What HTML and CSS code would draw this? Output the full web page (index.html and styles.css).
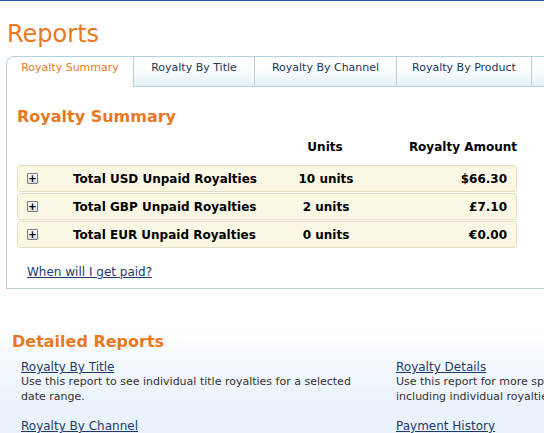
FILE: index.html
```html
<!DOCTYPE html>
<html>
<head>
<meta charset="utf-8">
<link rel="stylesheet" href="styles.css">
</head>
<body>
<div class="topbar"></div>
<h1 class="page-title">Reports</h1>
<div class="tabs">
  <div class="tab active tab-summary">Royalty Summary</div>
  <div class="tab tab-title">Royalty By Title</div>
  <div class="tab tab-channel">Royalty By Channel</div>
  <div class="tab tab-product">Royalty By Product</div>
  <div class="tab tab-details">Royalty Details</div>
</div>
<div class="panel">
  <h2 class="section-title">Royalty Summary</h2>
  <div class="summary">
    <div class="head">
      <span class="c-units">Units</span>
      <span class="c-amount">Royalty Amount</span>
    </div>
    <div class="row">
      <span class="plus">+</span>
      <span class="c-label">Total USD Unpaid Royalties</span>
      <span class="c-units">10 units</span>
      <span class="c-amount">$66.30</span>
    </div>
    <div class="row">
      <span class="plus">+</span>
      <span class="c-label">Total GBP Unpaid Royalties</span>
      <span class="c-units">2 units</span>
      <span class="c-amount">£7.10</span>
    </div>
    <div class="row">
      <span class="plus">+</span>
      <span class="c-label">Total EUR Unpaid Royalties</span>
      <span class="c-units">0 units</span>
      <span class="c-amount">€0.00</span>
    </div>
  </div>
  <a class="paid-link" href="#">When will I get paid?</a>
</div>
<div class="detailed">
  <h2 class="section-title">Detailed Reports</h2>
  <div class="report-grid">
    <div class="report">
      <a href="#">Royalty By Title</a>
      <p>Use this report to see individual title royalties for a selected date range.</p>
    </div>
    <div class="report">
      <a href="#">Royalty Details</a>
      <p>Use this report for more specific royalty information, including individual royalties by title and channel.</p>
    </div>
    <div class="report">
      <a href="#">Royalty By Channel</a>
      <p>Use this report to see royalties for each sales channel.</p>
    </div>
    <div class="report">
      <a href="#">Payment History</a>
      <p>Use this report to see your past payments.</p>
    </div>
  </div>
</div>
</body>
</html>
```
FILE: styles.css
```css
html, body {
  overflow: hidden;
}
body {
  margin: 0;
  width: 760px;
  font-family: "DejaVu Sans", Verdana, sans-serif;
  color: #000;
  background: #fff;
}
.topbar {
  height: 1px;
  background: #1f5c99;
}
.page-title {
  margin: 0;
  padding: 18px 0 0 7px;
  height: 37px;
  font-size: 24px;
  font-weight: normal;
  color: #e8791f;
  line-height: 30px;
}
.tabs {
  display: flex;
  margin-left: 6px;
  height: 31px;
}
.tab {
  flex: none;
  height: 31px;
  box-sizing: border-box;
  line-height: 22px;
  font-size: 11px;
  color: #1d3561;
  text-align: center;
  white-space: nowrap;
  border-top: 1px solid #b3d3e3;
  border-right: 1px solid #b3d3e3;
  border-bottom: 1px solid #b3d3e3;
  background: linear-gradient(#ffffff 35%, #e3f0f6);
}
.tab-summary { width: 128px; }
.tab-title { width: 121px; }
.tab-channel { width: 142px; }
.tab-product { width: 135px; }
.tab-details { width: 125px; }
.tab.active {
  color: #e8791f;
  background: #fff;
  border-left: 1px solid #b3d3e3;
  border-bottom: none;
  border-top-left-radius: 8px;
}
.panel {
  border-left: 1px solid #b3d3e3;
  border-bottom: 1px solid #b9d3df;
  margin-left: 6px;
  height: 201px;
  padding: 0 0 0 10px;
}
.section-title {
  margin: 0;
  font-size: 16px;
  font-weight: bold;
  color: #e8791f;
}
.panel .section-title {
  padding-top: 19px;
  line-height: 21px;
}
.summary {
  width: 500px;
  margin-top: 10px;
  font-size: 12px;
  font-weight: bold;
}
.head, .row {
  display: grid;
  grid-template-columns: 55px 208px 90px 1fr;
  align-items: center;
}
.head {
  height: 28px;
  line-height: 20px;
  align-items: start;
}
.head .c-units { grid-column: 3; }
.head .c-amount { grid-column: 4; }
.row {
  height: 27px;
  box-sizing: border-box;
  margin-bottom: 1px;
  background: #faf7e5;
  border: 1px solid #e4dfc3;
  border-radius: 3px;
  padding-right: 9px;
}
.c-units { text-align: center; }
.c-amount { text-align: right; }
.plus {
  margin-left: 9px;
  width: 9px;
  height: 9px;
  border: 1px solid #7c7c7c;
  border-radius: 1px;
  background: linear-gradient(#ffffff, #dcdcdc);
  font-size: 10px;
  line-height: 9px;
  text-align: center;
  font-weight: bold;
  color: #000;
}
.paid-link {
  display: inline-block;
  margin: 16px 0 0 10px;
  font-size: 12px;
  color: #1d3a6b;
}
.detailed {
  margin-top: 35px;
  padding: 7px 0 0 12px;
  height: 120px;
  background: linear-gradient(#ffffff, #eaf3fb 60%);
}
.detailed .section-title {
  line-height: 22px;
}
.report-grid {
  display: grid;
  grid-template-columns: 375px 360px;
  margin-left: 9px;
  margin-top: 7px;
}
.report a {
  display: block;
  font-size: 12px;
  line-height: 15px;
  color: #1d3a6b;
}
.report p {
  margin: 0;
  font-size: 11px;
  line-height: 14.7px;
  color: #333;
  width: 335px;
  min-height: 44px;
}
```
